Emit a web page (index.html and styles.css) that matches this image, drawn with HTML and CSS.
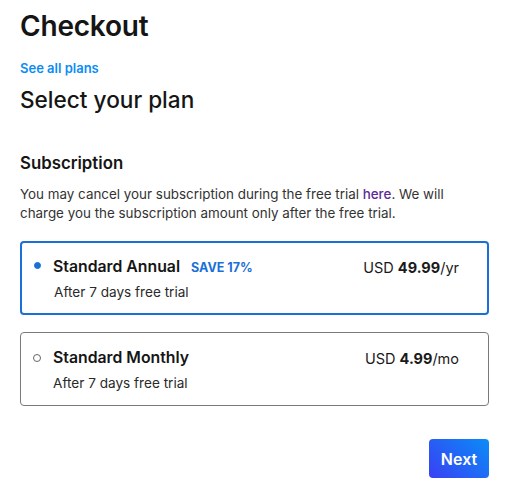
FILE: index.html
```html
<!DOCTYPE html>
<html lang="en">
<head>
<meta charset="utf-8">
<title>Checkout</title>
<link rel="stylesheet" href="styles.css">
</head>
<body>
<main class="checkout">
  <h1 class="title">Checkout</h1>
  <a class="plans-link" href="#">See all plans</a>
  <h2 class="subtitle">Select your plan</h2>

  <section class="subscription">
    <h3 class="section-title">Subscription</h3>
    <p class="note">You may cancel your subscription during the free trial <a class="note-link" href="#">here</a>. We will<br>charge you the subscription amount only after the free trial.</p>

    <div class="plans">
      <div class="plan plan-selected">
        <div class="plan-row">
          <span class="radio radio-on"></span>
          <span class="plan-name">Standard Annual</span>
          <span class="badge">SAVE 17%</span>
          <span class="price">USD <b>49.99</b>/yr</span>
        </div>
        <div class="plan-sub">After 7 days free trial</div>
      </div>
      <div class="plan">
        <div class="plan-row">
          <span class="radio"></span>
          <span class="plan-name">Standard Monthly</span>
          <span class="price">USD <b>4.99</b>/mo</span>
        </div>
        <div class="plan-sub">After 7 days free trial</div>
      </div>
    </div>
  </section>

  <div class="actions">
    <button class="next" type="button">Next</button>
  </div>
</main>
</body>
</html>
```

FILE: styles.css
```css
* { box-sizing: border-box; }

body {
  margin: 0;
  background: #ffffff;
  font-family: "Inter", "Lato", sans-serif;
  color: #1a1a1a;
}

.checkout {
  width: 507px;
  padding: 9px 18px 0 20px;
}

.title {
  margin: 0;
  font-size: 28px;
  line-height: 34px;
  font-weight: 600;
  letter-spacing: -0.2px;
  color: #151515;
}

.plans-link {
  display: block;
  margin-top: 17px;
  font-size: 13px;
  line-height: 16px;
  font-weight: 600;
  color: #0a8cf5;
  text-decoration: none;
}

.subtitle {
  margin: 10px 0 0;
  font-size: 22.6px;
  line-height: 28px;
  font-weight: 500;
  color: #151515;
}

.subscription {
  margin-top: 38px;
}

.section-title {
  margin: 0;
  font-size: 16.8px;
  line-height: 22px;
  font-weight: 600;
  color: #151515;
}

.note {
  margin: 11px 0 0;
  font-size: 13.4px;
  line-height: 19px;
  color: #333333;
}

.note-link {
  color: #5b2a96;
  font-weight: 500;
  text-decoration: none;
}

.plans {
  display: flex;
  flex-direction: column;
  gap: 17px;
  margin-top: 18px;
}

.plan {
  height: 74px;
  border: 1px solid #7a7a7a;
  border-radius: 4px;
  padding: 15px 29px 0 12px;
}

.plan-selected {
  border: 2px solid #1a6fd8;
  padding: 14px 28px 0 12px;
}

.plan-row {
  display: flex;
  align-items: center;
  height: 20px;
}

.radio {
  width: 8px;
  height: 8px;
  border-radius: 50%;
  border: 1px solid #666;
  margin-right: 12px;
  flex: none;
}

.radio-on {
  width: 7px;
  height: 7px;
  background: #1a6fd8;
  border-color: #1a6fd8;
  margin-top: -3px;
}

.plan-name {
  font-size: 15.8px;
  line-height: 20px;
  font-weight: 600;
  color: #151515;
}

.badge {
  margin-left: 11px;
  font-size: 12.5px;
  font-weight: 700;
  color: #1a6fd8;
}

.price {
  margin-left: auto;
  font-size: 14.5px;
  color: #1a1a1a;
}

.price b {
  font-weight: 700;
}

.plan-sub {
  margin: 6px 0 0 20px;
  font-size: 13.6px;
  line-height: 18px;
  color: #2a2a2a;
}

.actions {
  display: flex;
  justify-content: flex-end;
  margin-top: 33px;
}

.next {
  width: 60px;
  height: 39px;
  border: 0;
  border-radius: 4px;
  background: linear-gradient(45deg, #3a3ff3 0%, #0a8cf8 100%);
  color: #ffffff;
  font-family: inherit;
  font-size: 16px;
  font-weight: 600;
}
```
